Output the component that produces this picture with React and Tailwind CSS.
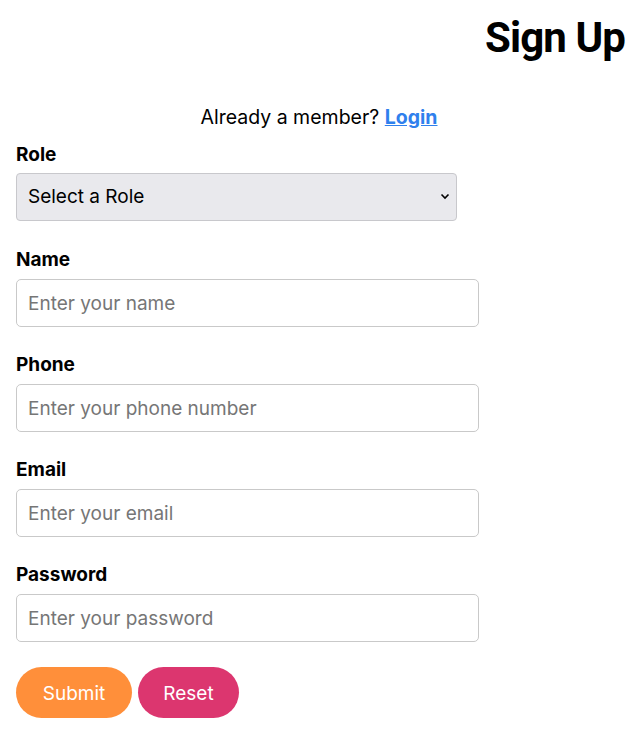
export default function App() {
  const fields = [
    { label: "Name", ph: "Enter your name", type: "text" },
    { label: "Phone", ph: "Enter your phone number", type: "tel" },
    { label: "Email", ph: "Enter your email", type: "email" },
    { label: "Password", ph: "Enter your password", type: "password" },
  ];
  return (
    <div className="min-h-screen bg-white text-black">
      <div className="px-4 font-['Inter',sans-serif]">
        <h1 className="text-right -mr-[3px] pt-[12px] font-['Roboto',sans-serif] text-[42px] leading-[52px] font-bold tracking-[-0.9px]">
          Sign Up
        </h1>
        <p className="text-center mt-[41px] text-[19.5px] leading-[24px]">
          Already a member?{" "}
          <a href="#" className="text-[#2f80ed] font-bold underline">Login</a>
        </p>
        <form className="w-[463px] mt-[14px]">
          <label className="block text-[19px] leading-[24px] font-bold">Role</label>
          <div className="relative w-[441px] mt-[6px]">
            <select className="appearance-none w-full h-[48px] rounded-[4px] border border-[#c8c8cc] bg-[#e9e9ed] pl-[11px] pr-8 text-[19px] text-black outline-none">
              <option>Select a Role</option>
            </select>
            <svg className="absolute right-[7px] top-[20px] pointer-events-none" width="10" height="7" viewBox="0 0 10 7">
              <path d="M1.5 1.5 L5 5 L8.5 1.5" fill="none" stroke="#000" strokeWidth="1.6" />
            </svg>
          </div>
          {fields.map((f, i) => (
            <div key={f.label} className={i === 0 ? "mt-[27px]" : "mt-[26px]"}>
              <label className="block text-[19px] leading-[24px] font-bold">{f.label}</label>
              <input
                type={f.type}
                placeholder={f.ph}
                className="mt-[7px] w-full h-[48px] rounded-[5px] border border-[#c9c9c9] px-[11px] text-[19px] placeholder-[#767676] outline-none"
              />
            </div>
          ))}
          <div className="flex gap-[6px] mt-[25px]">
            <button type="button" className="h-[51px] w-[116px] pt-[3px] rounded-full bg-[#ff8f3a] text-white text-[19px]">Submit</button>
            <button type="button" className="h-[51px] w-[101px] pt-[3px] rounded-full bg-[#dc366f] text-white text-[19px]">Reset</button>
          </div>
        </form>
      </div>
    </div>
  );
}
